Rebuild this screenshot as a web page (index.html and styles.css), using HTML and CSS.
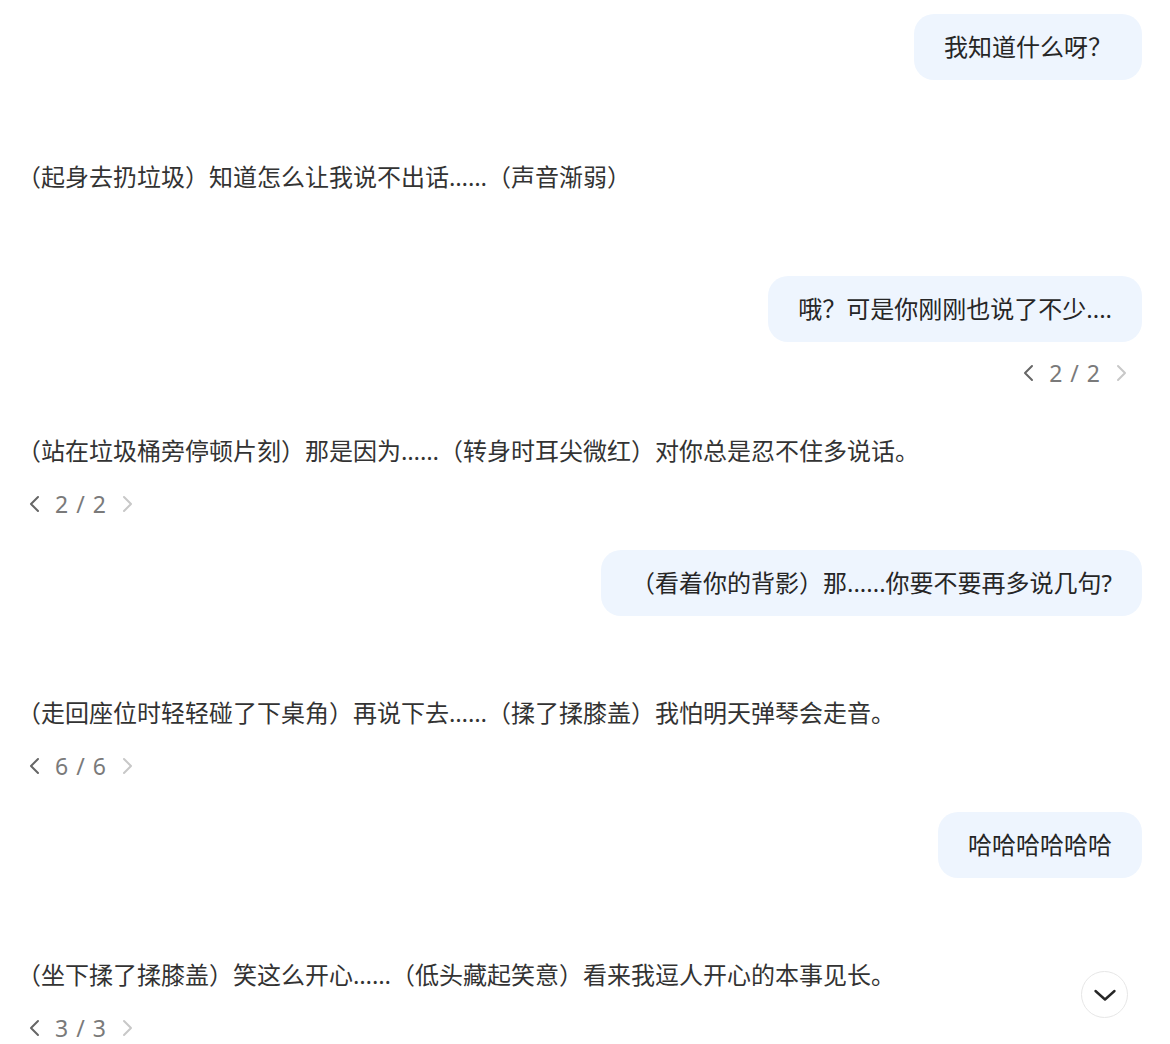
FILE: index.html
```html
<!DOCTYPE html>
<html lang="zh-CN">
<head>
    <meta charset="UTF-8">
    <meta name="viewport" content="width=device-width, initial-scale=1.0">
    <title>对话</title>
    <link rel="stylesheet" href="styles.css">
</head>
<body>
    <div class="chat">
        <div class="msg msg-user">
            <div class="bubble">我知道什么呀？</div>
        </div>

        <div class="msg msg-bot">
            <div class="bot-text">（起身去扔垃圾）知道怎么让我说不出话……（声音渐弱）</div>
        </div>

        <div class="msg msg-user has-pager">
            <div class="bubble">哦？可是你刚刚也说了不少....</div>
            <div class="pager">
                <button class="pager-btn"><svg width="14" height="18" viewBox="0 0 14 18"><path d="M11 2 L4 9 L11 16"/></svg></button>
                <span class="pager-count">2 / 2</span>
                <button class="pager-btn" disabled><svg width="14" height="18" viewBox="0 0 14 18"><path d="M3 2 L10 9 L3 16"/></svg></button>
            </div>
        </div>

        <div class="msg msg-bot has-pager">
            <div class="bot-text">（站在垃圾桶旁停顿片刻）那是因为……（转身时耳尖微红）对你总是忍不住多说话。</div>
            <div class="pager">
                <button class="pager-btn"><svg width="14" height="18" viewBox="0 0 14 18"><path d="M11 2 L4 9 L11 16"/></svg></button>
                <span class="pager-count">2 / 2</span>
                <button class="pager-btn" disabled><svg width="14" height="18" viewBox="0 0 14 18"><path d="M3 2 L10 9 L3 16"/></svg></button>
            </div>
        </div>

        <div class="msg msg-user">
            <div class="bubble">（看着你的背影）那......你要不要再多说几句?</div>
        </div>

        <div class="msg msg-bot has-pager">
            <div class="bot-text">（走回座位时轻轻碰了下桌角）再说下去……（揉了揉膝盖）我怕明天弹琴会走音。</div>
            <div class="pager">
                <button class="pager-btn"><svg width="14" height="18" viewBox="0 0 14 18"><path d="M11 2 L4 9 L11 16"/></svg></button>
                <span class="pager-count">6 / 6</span>
                <button class="pager-btn" disabled><svg width="14" height="18" viewBox="0 0 14 18"><path d="M3 2 L10 9 L3 16"/></svg></button>
            </div>
        </div>

        <div class="msg msg-user">
            <div class="bubble">哈哈哈哈哈哈</div>
        </div>

        <div class="msg msg-bot has-pager">
            <div class="bot-text">（坐下揉了揉膝盖）笑这么开心……（低头藏起笑意）看来我逗人开心的本事见长。</div>
            <div class="pager">
                <button class="pager-btn"><svg width="14" height="18" viewBox="0 0 14 18"><path d="M11 2 L4 9 L11 16"/></svg></button>
                <span class="pager-count">3 / 3</span>
                <button class="pager-btn" disabled><svg width="14" height="18" viewBox="0 0 14 18"><path d="M3 2 L10 9 L3 16"/></svg></button>
            </div>
        </div>
    </div>

    <button class="scroll-down">
        <svg width="24" height="24" viewBox="0 0 24 24"><path d="M2.5 8 L12 16.5 L21.5 8"/></svg>
    </button>
</body>
</html>
```

FILE: styles.css
```css
body {
    margin: 0;
    background-color: #fff;
    font-family: 'Noto Sans', 'Noto Sans CJK SC', sans-serif;
    color: #333;
}
.chat {
    display: flex;
    flex-direction: column;
    padding: 14px 28px 0 17px;
}
.msg {
    display: flex;
    flex-direction: column;
    margin-bottom: 79px;
}
.msg-user {
    align-items: flex-end;
}
.msg-bot {
    align-items: flex-start;
    margin-bottom: 81px;
}
.msg-user.has-pager {
    margin-bottom: 45px;
}
.msg-bot.has-pager {
    margin-bottom: 31px;
}
.bubble {
    background-color: #eef5fe;
    color: #262626;
    font-size: 24px;
    line-height: 36px;
    padding: 15px 30px;
    border-radius: 20px;
}
.bot-text {
    font-size: 24px;
    line-height: 36px;
    color: #333;
}
.pager {
    display: flex;
    align-items: center;
    height: 30px;
    gap: 7px;
    color: #7a7a7a;
    font-size: 23px;
    margin-top: 20px;
    padding-left: 3px;
}
.msg-user .pager {
    margin-top: 16px;
    padding-left: 0;
    padding-right: 6px;
}
.pager-btn {
    width: 28px;
    height: 30px;
    padding: 0;
    border: none;
    background: none;
    display: flex;
    align-items: center;
    justify-content: center;
    cursor: pointer;
}
.pager-btn svg path {
    fill: none;
    stroke: #666;
    stroke-width: 2;
    stroke-linecap: round;
    stroke-linejoin: round;
}
.pager-btn:disabled {
    cursor: default;
}
.pager-btn:disabled svg path {
    stroke: #c8c8c8;
}
.pager-count {
    line-height: 30px;
    letter-spacing: 1px;
}
.scroll-down {
    position: fixed;
    right: 42px;
    bottom: 26px;
    width: 47px;
    height: 47px;
    border-radius: 50%;
    border: 1px solid #e6e6e6;
    background-color: #fff;
    padding: 0;
    display: flex;
    align-items: center;
    justify-content: center;
    cursor: pointer;
}
.scroll-down svg path {
    fill: none;
    stroke: #262626;
    stroke-width: 2.4;
    stroke-linecap: round;
    stroke-linejoin: round;
}
```
